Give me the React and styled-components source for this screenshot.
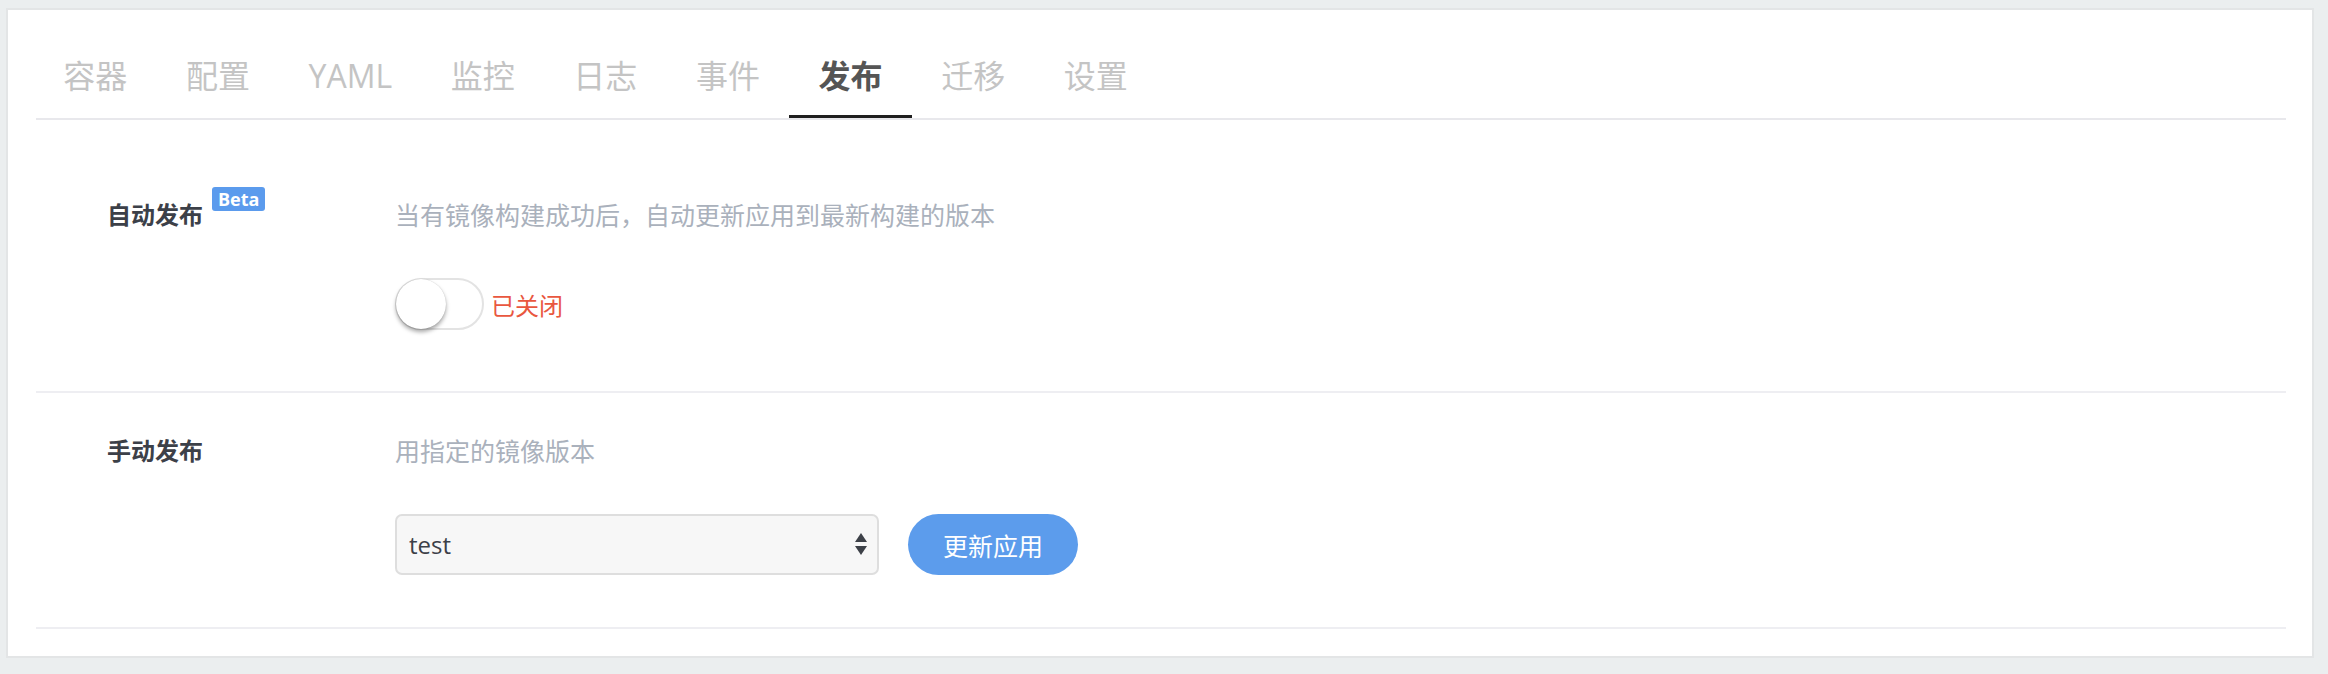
import React from "react";
import styled, { createGlobalStyle } from "styled-components";

const GlobalStyle = createGlobalStyle`
  body {
    margin: 0;
    background: #ebeeef;
    font-family: "Open Sans", "Noto Sans CJK SC", sans-serif;
  }
`;

const Card = styled.section`
  margin: 8px 14px 17px 6px;
  border: 2px solid #e3e5e6;
  background: #fff;
  padding: 0 26px 27px 28px;
`;

const TabBar = styled.nav`
  display: flex;
  padding-top: 44px;
  border-bottom: 2px solid #e8e8ec;
`;

const Tab = styled.div`
  font-size: 32px;
  line-height: 44px;
  padding: 0 29.3px 17px;
  border-bottom: 3px solid ${(p) => (p.$active ? "#1f1f1f" : "transparent")};
  color: ${(p) => (p.$active ? "#555" : "#c4c4c4")};
  font-weight: ${(p) => (p.$active ? 700 : 400)};
  cursor: pointer;

  &:first-child {
    margin-left: -2px;
  }
`;

const Content = styled.div`
  padding-top: 37px;
`;

const Row = styled.div`
  display: grid;
  grid-template-columns: 288px 1fr;
  padding: 43px 0 49px 71px;
  border-bottom: 2px solid #eeeef2;
`;

const LabelCell = styled.div`
  display: flex;
  align-items: flex-start;
`;

const Label = styled.h4`
  margin: 0;
  font-size: 24px;
  line-height: 30px;
  font-weight: 700;
  color: #3c4048;
`;

const Badge = styled.span`
  margin: -13px 0 0 9px;
  height: 24px;
  padding: 0 6px;
  border-radius: 3px;
  background: #5b9bed;
  color: #fff;
  font-size: 18px;
  font-weight: 700;
  line-height: 24px;
`;

const Desc = styled.p`
  margin: 0;
  font-size: 25px;
  line-height: 30px;
  color: #aab1bc;
`;

const Controls = styled.div`
  display: flex;
  align-items: flex-start;
  min-height: 64px;
  margin-top: 48px;
`;

const SwitchGroup = styled.label`
  display: flex;
  align-items: center;
  gap: 7px;
`;

const Track = styled.span`
  position: relative;
  display: block;
  width: 89px;
  height: 52px;
  box-sizing: border-box;
  border: 2px solid #e3e3e3;
  border-radius: 26px;
  background: #fff;
`;

const Knob = styled.span`
  position: absolute;
  top: -1px;
  left: -1px;
  width: 50px;
  height: 50px;
  border-radius: 50%;
  background: #fff;
  box-shadow: 0 3px 4px rgba(0, 0, 0, 0.35), 0 0 1px rgba(0, 0, 0, 0.2);
`;

const StateText = styled.span`
  font-size: 24px;
  color: #e9573f;
`;

const SelectBox = styled.div`
  position: relative;
  width: 484px;
  height: 61px;
`;

const Select = styled.select`
  appearance: none;
  width: 100%;
  height: 100%;
  box-sizing: border-box;
  border: 2px solid #dedede;
  border-radius: 7px;
  background: #f7f7f7;
  padding: 0 40px 0 12px;
  font-family: "Open Sans", "Noto Sans CJK SC", sans-serif;
  font-size: 24px;
  color: #3c4048;
  outline: none;
`;

const Arrows = styled.svg`
  position: absolute;
  right: 12px;
  top: 19px;
  pointer-events: none;
`;

const Button = styled.button`
  margin-left: 29px;
  width: 170px;
  height: 61px;
  border: none;
  border-radius: 31px;
  background: #5c9cec;
  color: #fff;
  font-family: "Open Sans", "Noto Sans CJK SC", sans-serif;
  font-size: 25px;
  cursor: pointer;
`;

const tabs = ["容器", "配置", "YAML", "监控", "日志", "事件", "发布", "迁移", "设置"];

const App = () => {
  return (
    <>
      <GlobalStyle />
      <Card>
        <TabBar>
          {tabs.map((t) => (
            <Tab key={t} $active={t === "发布"}>
              {t}
            </Tab>
          ))}
        </TabBar>
        <Content>
          <Row>
            <LabelCell>
              <Label>自动发布</Label>
              <Badge>Beta</Badge>
            </LabelCell>
            <div>
              <Desc>当有镜像构建成功后，自动更新应用到最新构建的版本</Desc>
              <Controls>
                <SwitchGroup>
                  <Track>
                    <Knob />
                  </Track>
                  <StateText>已关闭</StateText>
                </SwitchGroup>
              </Controls>
            </div>
          </Row>
          <Row>
            <LabelCell>
              <Label>手动发布</Label>
            </LabelCell>
            <div>
              <Desc>用指定的镜像版本</Desc>
              <Controls>
                <SelectBox>
                  <Select defaultValue="test">
                    <option value="test">test</option>
                  </Select>
                  <Arrows width="12" height="22" viewBox="0 0 12 22">
                    <polygon points="0,9 6,0 12,9" fill="#3d4148" />
                    <polygon points="0,13 12,13 6,22" fill="#3d4148" />
                  </Arrows>
                </SelectBox>
                <Button>更新应用</Button>
              </Controls>
            </div>
          </Row>
        </Content>
      </Card>
    </>
  );
};

export default App;
